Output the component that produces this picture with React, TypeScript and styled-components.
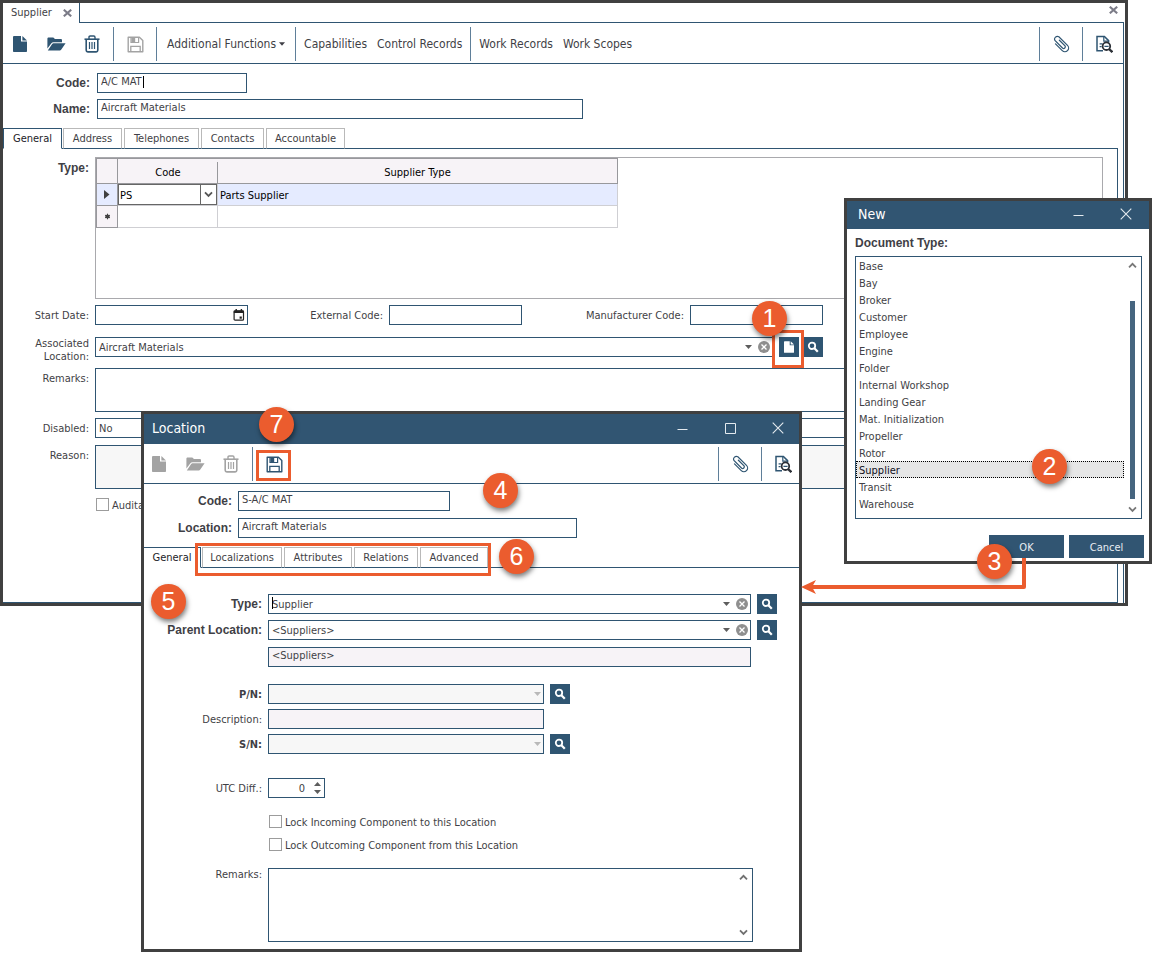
import React, { ReactNode, useId, useState } from 'react';
import styled, { createGlobalStyle, css } from 'styled-components';

const navy = '#2f5572';
const titleBlue = '#315572';
const frameGray = '#404040';
const orange = '#eb5c2e';
const text = '#3f3f46';
const uiFont = '"DejaVu Sans Condensed", "DejaVu Sans", sans-serif';
const labelFont = '"Liberation Sans", Arial, sans-serif';

const GlobalStyle = createGlobalStyle`
  *, *::before, *::after { box-sizing: border-box; }
  body { margin: 0; background: #fff; color: ${text}; font: 11px/16px ${uiFont}; }
  button, input, select, textarea { margin: 0; font: inherit; color: inherit; border-radius: 0; }
  button { padding: 0; border: 0; background: none; }
`;

/* ---------- desktop and windows ---------- */

const Desktop = styled.main`
  position: relative;
  min-width: 1152px;
  min-height: 953px;
`;

const WindowFrame = styled.section`
  position: absolute;
  background: #fff;
  border: 3px solid ${frameGray};
`;

const SupplierWindow = styled(WindowFrame)`
  top: 0;
  left: 0;
  right: 24px;
`;

const LocationWindow = styled(WindowFrame)`
  top: 411px;
  left: 141px;
  width: 661px;
`;

const NewWindow = styled(WindowFrame)`
  top: 198px;
  left: 844px;
  width: 308px;
`;

const TitleBar = styled.header<{ $tall?: boolean }>`
  display: flex;
  align-items: center;
  justify-content: space-between;
  height: ${(p) => (p.$tall ? 30 : 28)}px;
  padding: 0 ${(p) => (p.$tall ? 7 : 9)}px 2px ${(p) => (p.$tall ? 8 : 11)}px;
  background: ${titleBlue};
  color: #fff;
`;

const TitleText = styled.h2`
  margin: 0;
  font-size: 14px;
  line-height: 20px;
  font-weight: normal;
`;

const TitleButtons = styled.div`
  display: flex;
  gap: 20px;
`;

const TitleButton = styled.button`
  display: grid;
  place-items: center;
  width: 28px;
  height: 20px;
  color: #e4eaef;
`;

/* ---------- document tab strip ---------- */

const DocStrip = styled.div`
  display: flex;
  height: 20px;
  margin-right: 1px;
`;

const DocTab = styled.div`
  display: flex;
  align-items: center;
  justify-content: space-between;
  width: 77px;
  padding: 0 7px 1px 8px;
  border-right: 1px solid ${navy};
`;

const DocStripRest = styled.div`
  display: flex;
  flex: 1;
  align-items: flex-start;
  justify-content: flex-end;
  padding: 3px 6px 0 0;
  border-bottom: 1px solid ${navy};
`;

const SmallClose = styled.button`
  display: grid;
  place-items: center;
  width: 10px;
  height: 8px;
  color: #7c7c88;
`;

const DocBody = styled.div`
  min-height: 580px;
  margin-right: 1px;
  border-right: 1px solid ${navy};
`;

/* ---------- toolbar ---------- */

const Toolbar = styled.div<{ $dialog?: boolean }>`
  display: flex;
  justify-content: space-between;
  height: ${(p) => (p.$dialog ? 40 : 41)}px;
  padding: ${(p) => (p.$dialog ? '3px 2px 2px 1px' : '4px 5px 2px 3px')};
  border-bottom: 1px solid ${navy};
`;

const ToolSide = styled.div`
  display: flex;
`;

const ToolGroup = styled.div<{ $edge?: 'start' | 'end'; $last?: boolean }>`
  display: flex;
  align-items: center;
  gap: 8px;
  padding-left: ${(p) => (p.$edge === 'start' ? 0 : 7)}px;
  padding-right: ${(p) => (p.$last ? 0 : 7)}px;
  ${(p) =>
    p.$edge === 'end'
      ? css`border-left: 1px solid #5f7f99;`
      : !p.$last && css`border-right: 1px solid #5f7f99;`}
`;

const TextGroup = styled.div<{ $menu?: boolean; $last?: boolean }>`
  display: flex;
  align-items: center;
  gap: 10px;
  padding: 0 ${(p) => (p.$menu ? 10 : 8)}px;
  font-size: 12px;
  border-right: ${(p) => (p.$last ? '0' : '1px solid #5f7f99')};
`;

const IconButton = styled.button`
  display: grid;
  place-items: center;
  width: 28px;
  height: 28px;
  color: ${navy};
  &:disabled { color: #a3a3a3; }
`;

const TextButton = styled.button`
  display: flex;
  align-items: center;
  gap: 3px;
  white-space: nowrap;
`;

/* ---------- form parts ---------- */

const HeadForm = styled.div<{ $dialog?: boolean }>`
  display: grid;
  grid-template-columns: ${(p) => (p.$dialog ? 88 : 87)}px 1fr;
  column-gap: ${(p) => (p.$dialog ? 6 : 7)}px;
  row-gap: ${(p) => (p.$dialog ? 7 : 6)}px;
  padding: ${(p) => (p.$dialog ? 7 : 9)}px 0 9px;
`;

const Row = styled.div<{ $gap?: number; $labelWidth: number }>`
  display: grid;
  grid-template-columns: ${(p) => p.$labelWidth}px 1fr;
  column-gap: 6px;
  margin-top: ${(p) => p.$gap ?? 0}px;
`;

const Label = styled.label<{ $compact?: boolean }>`
  padding-top: ${(p) => (p.$compact ? 0 : 2)}px;
  text-align: right;
  line-height: ${(p) => (p.$compact ? 13 : 18)}px;
`;

const BoldLabel = styled.label`
  text-align: right;
  font: bold 12px/20px ${labelFont};
`;

const BoldCaption = styled.span`
  text-align: right;
  font: bold 12px/22px ${labelFont};
`;

const CodeLabel = styled(Label)`
  font-weight: bold;
`;

const Fields = styled.div`
  display: flex;
  gap: 6px;
  min-width: 0;
`;

const boxStyle = css`
  border: 1px solid ${navy};
  background: #fff;
  outline: none;
`;

const Input = styled.input<{ $w: number; $top?: boolean }>`
  ${boxStyle}
  display: block;
  width: ${(p) => p.$w}px;
  height: 20px;
  padding: 0 3px ${(p) => (p.$top ? 3 : 0)}px;
  &:read-only { background: #f7f3f7; }
`;

const InputWrap = styled.div`
  position: relative;
  width: fit-content;
`;

const Caret = styled.span<{ $x: number }>`
  position: absolute;
  top: 3px;
  left: ${(p) => p.$x}px;
  width: 1px;
  height: 12px;
  background: #000;
`;

const InlineLabel = styled(Label)<{ $w: number }>`
  width: ${(p) => p.$w}px;
  margin-left: -6px;
`;

const Area = styled.textarea<{ $h: number; $w?: number }>`
  ${boxStyle}
  display: block;
  width: ${(p) => (p.$w ? `${p.$w}px` : '100%')};
  height: ${(p) => p.$h}px;
  padding: 2px;
  resize: none;
  overflow: hidden;
  &:disabled { background: #f7f7f7; }
`;

const Select = styled.select`
  ${boxStyle}
  appearance: none;
  display: block;
  width: 100%;
  height: 20px;
  padding: 2px 3px 0;
  opacity: 1;
  &:disabled { background: #f7f7f7; }
`;

const ComboWrap = styled.div<{ $w?: number }>`
  position: relative;
  width: ${(p) => (p.$w ? `${p.$w}px` : '100%')};
`;

const ComboTools = styled.div`
  position: absolute;
  top: 0;
  right: 3px;
  display: flex;
  align-items: center;
  gap: 6px;
  height: 20px;
  color: #5d5d5d;
  pointer-events: none;
`;

const ClearButton = styled.button`
  display: grid;
  place-items: center;
  width: 12px;
  height: 12px;
  border-radius: 50%;
  background: #8f8f8f;
  color: #fff;
  pointer-events: auto;
`;

const SquareButton = styled.button`
  display: grid;
  place-items: center;
  width: 20px;
  height: 20px;
  background: ${navy};
  color: #fff;
`;

const ButtonPair = styled.div`
  display: flex;
  gap: 4px;
`;

const CheckLabel = styled.label`
  display: flex;
  align-items: flex-start;
  gap: 3px;
  height: 13px;
  padding-left: 1px;
  line-height: 15px;
  white-space: nowrap;
`;

const Check = styled.input`
  appearance: none;
  width: 13px;
  height: 13px;
  border: 1px solid #9c9c9c;
  background: #fff;
  &:checked { background: ${navy}; }
`;

const SpinWrap = styled.div`
  position: relative;
  width: 57px;
`;

const SpinInput = styled(Input)`
  appearance: textfield;
  padding-right: 19px;
  text-align: right;
  &::-webkit-inner-spin-button { appearance: none; }
`;

const SpinButtons = styled.div`
  position: absolute;
  top: 2px;
  right: 4px;
  display: flex;
  flex-direction: column;
  color: #5d5d5d;
`;

const SpinButton = styled.button`
  display: grid;
  place-items: center;
  width: 8px;
  height: 8px;
`;

const AreaWrap = styled.div`
  position: relative;
  width: fit-content;
`;

const AreaArrows = styled.div`
  position: absolute;
  top: 6px;
  bottom: 6px;
  right: 5px;
  display: flex;
  flex-direction: column;
  justify-content: space-between;
  color: #707070;
`;

/* ---------- tabs ---------- */

const Tabs = styled.div`
  display: flex;
  height: 21px;
`;

const Tab = styled.button<{ $w: number; $active?: boolean; $flush?: boolean }>`
  width: ${(p) => p.$w}px;
  padding-top: 1px;
  border: 1px solid #b9b9b9;
  border-bottom: 1px solid ${navy};
  ${(p) =>
    p.$active &&
    css`
      border-color: ${navy};
      border-bottom-color: transparent;
      color: #1c1c28;
    `}
  ${(p) => p.$flush && css`border-left: 0;`}
`;

const TabGap = styled.span<{ $narrow?: boolean }>`
  width: ${(p) => (p.$narrow ? 1 : 2)}px;
  border-bottom: 1px solid ${navy};
`;

const TabRest = styled.span<{ $inset?: boolean }>`
  flex: 1;
  margin-right: ${(p) => (p.$inset ? 5 : 0)}px;
  border-bottom: 1px solid ${navy};
`;

const SupplierPanel = styled.div`
  min-height: 454px;
  margin-right: 5px;
  padding: 8px 14px 8px 0;
  border: solid ${navy};
  border-width: 0 1px 1px 0;
`;

const LocationPanel = styled.div`
  padding: 26px 0 7px;
`;

/* ---------- type table ---------- */

const GridBox = styled.div`
  height: 142px;
  border: 1px solid #a9a9ad;
`;

const TypeTable = styled.table`
  width: 522px;
  table-layout: fixed;
  border-collapse: separate;
  border-spacing: 0;
  color: #000;

  th {
    height: 26px;
    padding: 3px 0 0;
    border: solid #98989c;
    border-width: 1px 0;
    background: #f7f3f7;
    font-weight: normal;
  }
  th:last-child { border-right-width: 1px; }
  th:nth-child(2) { background: linear-gradient(#98989c, #98989c) right bottom / 1px 21px no-repeat #f7f3f7; }
  td {
    height: 22px;
    padding: 0;
    border: solid #cfcfd3;
    border-width: 0 1px 1px 0;
  }
  td:last-child { padding: 2px 0 0 2px; }
  th:first-child, td:first-child {
    border-left: 1px solid #98989c;
    border-right: 1px solid #98989c;
  }
  td:first-child {
    background: #f7f3f7;
    border-bottom-color: #98989c;
    text-align: center;
    line-height: 0;
  }
`;

const ActiveRow = styled.tr`
  td, td:first-child { background: #e5ebff; }
`;

const CellSelectWrap = styled.div`
  position: relative;
  display: flex;
  align-items: center;
`;

const CellSelect = styled.select`
  appearance: none;
  display: block;
  width: 100%;
  height: 21px;
  padding: 2px 1px 0;
  border: 1px solid #666;
  background: #fff;
  color: #000;
  outline: none;
`;

const CellArrow = styled.span`
  position: absolute;
  top: 0;
  right: 0;
  display: grid;
  place-items: center;
  width: 17px;
  height: 21px;
  border: 1px solid #666;
  color: #555;
  pointer-events: none;
`;

/* ---------- document type list ---------- */

const DialogBody = styled.div`
  padding: 0 5px 3px 8px;
`;

const ListHeading = styled.h3`
  margin: 0;
  padding-top: 2px;
  font: bold 12px/25px ${labelFont};
`;

const ListFrame = styled.div`
  display: flex;
  height: 263px;
  margin-right: 2px;
  border: 1px solid ${navy};
`;

const List = styled.ul`
  flex: 1;
  margin: 0;
  padding: 0;
  list-style: none;
`;

const ListItem = styled.li<{ $selected: boolean }>`
  height: 17px;
  padding: 2px 3px 0;
  line-height: 16px;
  cursor: default;
  ${(p) =>
    p.$selected &&
    css`
      background: #e6e6e6;
      color: #10101c;
      outline: 1px dotted #000;
      outline-offset: -1px;
    `}
`;

const ScrollTrack = styled.div`
  display: flex;
  flex-direction: column;
  align-items: center;
  width: 17px;
  padding: 5px 0;
  color: #777;
`;

const ScrollThumb = styled.span`
  width: 5px;
  height: 200px;
  margin: 32px 0 7px;
  background: #46657f;
`;

const DialogActions = styled.div`
  display: flex;
  justify-content: flex-end;
  gap: 5px;
  margin-top: 16px;
`;

const ActionButton = styled.button`
  width: 75px;
  height: 23px;
  padding-top: 2px;
  background: ${titleBlue};
  color: #e8edf2;
`;

/* ---------- annotations over the windows ---------- */

const Highlight = styled.span<{ $x: number; $y: number; $w: number; $h: number }>`
  position: absolute;
  left: ${(p) => p.$x}px;
  top: ${(p) => p.$y}px;
  width: ${(p) => p.$w}px;
  height: ${(p) => p.$h}px;
  border: 3px solid ${orange};
  pointer-events: none;
`;

const Callout = styled.span<{ $x: number; $y: number }>`
  position: absolute;
  left: ${(p) => p.$x}px;
  top: ${(p) => p.$y}px;
  width: 35px;
  height: 35px;
  border-radius: 50%;
  background: ${orange};
  box-shadow: 1px 3px 5px rgba(0, 0, 0, 0.5);
  color: #fff;
  font: 25px/35px ${labelFont};
  text-align: center;
  pointer-events: none;
`;

const ArrowLayer = styled.svg`
  position: absolute;
  left: 800px;
  top: 556px;
  pointer-events: none;
`;

/* ---------- icons ---------- */

const FileIcon = ({ small }: { small?: boolean }) => (
  <svg width={small ? 10 : 14} height={small ? 12 : 16} viewBox="0 0 14 16" fill="currentColor" aria-hidden>
    <path d="M1 0h7v5.5h6V15.2a.8.8 0 0 1-.8.8H.8a.8.8 0 0 1-.8-.8V1a1 1 0 0 1 1-1z" />
    <path d="M9.4 0 14 4.4H9.4z" />
  </svg>
);

const FolderIcon = () => (
  <svg width="19" height="14" viewBox="0 0 19 14" fill="currentColor" aria-hidden>
    <path d="M.4 11.5V1.6C.4.8 1 .4 1.7.4h4.2c.7 0 1.1.3 1.4.9l.4.8h6c.8 0 1.3.5 1.3 1.2v1.9H6.6c-1 0-1.8.4-2.4 1.2z" />
    <path d="M.8 13.6 5 7.3c.5-.8 1.1-1.1 2-1.1h11.6l-4.3 6.3c-.5.8-1.1 1.1-2 1.1z" />
  </svg>
);

const TrashIcon = () => (
  <svg width="16" height="18" viewBox="0 0 16 18" fill="none" stroke="currentColor" aria-hidden>
    <path d="M.5 4.2h15" strokeWidth="1.6" />
    <path d="M5 4V2.2c0-.8.4-1.2 1.2-1.2h3.6c.8 0 1.2.4 1.2 1.2V4" strokeWidth="1.4" />
    <path d="M2.2 4.5v10.8c0 1 .6 1.6 1.6 1.6h8.4c1 0 1.6-.6 1.6-1.6V4.5" strokeWidth="1.6" />
    <path d="M5.5 7v7M8 7v7M10.5 7v7" strokeWidth="1.2" />
  </svg>
);

const SaveIcon = () => (
  <svg width="17" height="17" viewBox="0 0 17 17" fill="none" stroke="currentColor" aria-hidden>
    <path d="M1.2 1.2h11.2l3.4 3.4v11.2H1.2z" strokeWidth="1.4" strokeLinejoin="round" />
    <path d="M4 1.5v5h7.6v-5" strokeWidth="1.2" />
    <path d="M4.4 1.5h3.8v4.8H4.4z" fill="currentColor" stroke="none" />
    <path d="M3.8 15.6v-5.2h9.4v5.2" strokeWidth="1.3" />
  </svg>
);

const ClipIcon = () => (
  <svg width="18" height="18" viewBox="0 0 18 18" fill="none" stroke="currentColor" strokeWidth="1.2" strokeLinecap="round" aria-hidden>
    <path
      transform="rotate(-45 9 9)"
      d="M5.2 5V14.6a3.7 3.7 0 0 0 7.4 0V2.4a2.8 2.8 0 0 0-5.4-.2v11a1.7 1.7 0 0 0 3.3 0V5.2"
    />
  </svg>
);

const PreviewIcon = () => (
  <svg width="18" height="18" viewBox="0 0 18 18" fill="none" stroke="currentColor" aria-hidden>
    <path d="M8 15.8H2V1.4h7.4l4.2 4.2v1.8" strokeWidth="1.5" />
    <path d="M8.8 1.4v4.8h4.8" strokeWidth="1.2" />
    <path d="M4.6 8.8h3M4.6 11.6h2M9.4 11.4h4.2" strokeWidth="1.3" />
    <circle cx="11.4" cy="11.2" r="3.8" stroke="#2b2f36" strokeWidth="1.8" />
    <path d="m14 14 3.4 3.2" stroke="#2b2f36" strokeWidth="2.4" />
  </svg>
);

const SearchIcon = () => (
  <svg width="12" height="12" viewBox="0 0 12 12" fill="none" stroke="currentColor" aria-hidden>
    <circle cx="5" cy="4.8" r="3.2" strokeWidth="1.8" />
    <path d="m7.4 7.2 3.4 3.6" strokeWidth="2.2" />
  </svg>
);

const CalendarIcon = () => (
  <svg width="12" height="12" viewBox="0 0 12 12" fill="none" stroke="#222" aria-hidden>
    <rect x="1.1" y="1.8" width="9.4" height="9.4" rx="1" strokeWidth="1.2" />
    <path d="M.8 2.8h10" strokeWidth="2.4" />
    <path d="M3.2 0v2M8.4 0v2" strokeWidth="1.4" />
    <path d="M6.6 8.6h2.2" strokeWidth="2.2" />
  </svg>
);

const Triangle = ({ up, dim, w = 7 }: { up?: boolean; dim?: boolean; w?: number }) => (
  <svg width={w} height="4" viewBox="0 0 7 4" fill={dim ? '#b9b9b9' : 'currentColor'} aria-hidden>
    <path d={up ? 'M0 4h7L3.5 0z' : 'M0 0h7L3.5 4z'} />
  </svg>
);

const Chevron = ({ up }: { up?: boolean }) => (
  <svg width="9" height="7" viewBox="0 0 9 7" fill="none" stroke="currentColor" strokeWidth="1.8" aria-hidden>
    <path d={up ? 'M1 5.4 4.5 1.8 8 5.4' : 'M1 1.4 4.5 5 8 1.4'} />
  </svg>
);

const BoldCross = () => (
  <svg width="9" height="8" viewBox="0 0 9 8" stroke="currentColor" strokeWidth="2.1" aria-hidden>
    <path d="m.8.7 7.4 6.6M8.2.7.8 7.3" />
  </svg>
);

const TinyCross = () => (
  <svg width="6" height="6" viewBox="0 0 6 6" stroke="currentColor" strokeWidth="1.3" aria-hidden>
    <path d="m.5.5 5 5m0-5-5 5" />
  </svg>
);

const MinimizeIcon = () => (
  <svg width="11" height="11" viewBox="0 0 11 11" stroke="currentColor" aria-hidden>
    <path d="M.5 6.5h10" />
  </svg>
);

const MaximizeIcon = () => (
  <svg width="11" height="11" viewBox="0 0 11 11" fill="none" stroke="currentColor" aria-hidden>
    <path d="M.5.5h10v10H.5z" />
  </svg>
);

const CloseIcon = () => (
  <svg width="12" height="12" viewBox="0 0 12 12" stroke="currentColor" strokeWidth="1.1" aria-hidden>
    <path d="m.7.7 10.6 10.6M11.3.7.7 11.3" />
  </svg>
);

const RowMarker = () => (
  <svg width="6" height="9" viewBox="0 0 6 9" fill="#404040" aria-hidden>
    <path d="M0 0v9l5.5-4.5z" />
  </svg>
);

const NewRowMarker = () => (
  <svg width="7" height="7" viewBox="0 0 7 7" stroke="#404040" fill="#404040" aria-hidden>
    <circle cx="3.5" cy="3.5" r="2.1" stroke="none" />
    <path d="M3.5.7v5.6M1 2.1l5 2.8M6 2.1 1 4.9" strokeWidth="1" />
  </svg>
);

/* ---------- composed controls ---------- */

type ComboProps = { id: string; w?: number; value?: string; clearable?: boolean; disabled?: boolean; children?: ReactNode };

function Combo({ id, w, value = '', clearable, disabled, children }: ComboProps) {
  const [current, setCurrent] = useState(value);
  return (
    <ComboWrap $w={w}>
      <Select id={id} value={current} disabled={disabled} onChange={(e) => setCurrent(e.target.value)}>
        <option value={value}>{value}</option>
        {value !== '' && <option value="" />}
      </Select>
      <ComboTools>
        <Triangle dim={disabled} />
        {clearable && (
          <ClearButton type="button" aria-label="Clear" onClick={() => setCurrent('')}>
            <TinyCross />
          </ClearButton>
        )}
      </ComboTools>
      {children}
    </ComboWrap>
  );
}

const SearchButton = () => (
  <SquareButton type="button" aria-label="Search">
    <SearchIcon />
  </SquareButton>
);

function TabBar({ items, inset, flush }: { items: [string, number][]; inset?: boolean; flush?: boolean }) {
  const [active, setActive] = useState(items[0][0]);
  return (
    <Tabs role="tablist">
      {items.map(([name, width], i) => (
        <React.Fragment key={name}>
          {i > 0 && <TabGap $narrow={i === 1} />}
          <Tab
            type="button"
            role="tab"
            aria-selected={active === name}
            $w={width}
            $active={active === name}
            $flush={flush && i === 0}
            onClick={() => setActive(name)}
          >
            {name}
          </Tab>
        </React.Fragment>
      ))}
      <TabRest $inset={inset} />
    </Tabs>
  );
}

function FileTools({ disabled }: { disabled?: boolean }) {
  return (
    <ToolGroup $edge="start">
      <IconButton type="button" aria-label="New" disabled={disabled}><FileIcon /></IconButton>
      <IconButton type="button" aria-label="Open" disabled={disabled}><FolderIcon /></IconButton>
      <IconButton type="button" aria-label="Delete" disabled={disabled}><TrashIcon /></IconButton>
    </ToolGroup>
  );
}

function DocumentTools() {
  return (
    <ToolSide>
      <ToolGroup $edge="end">
        <IconButton type="button" aria-label="Attachments"><ClipIcon /></IconButton>
      </ToolGroup>
      <ToolGroup $edge="end" $last>
        <IconButton type="button" aria-label="Preview"><PreviewIcon /></IconButton>
      </ToolGroup>
    </ToolSide>
  );
}

/* ---------- windows ---------- */

const SIDE = 86;

function SupplierForm() {
  const id = useId();
  return (
    <SupplierPanel>
      <Row $labelWidth={SIDE}>
        <BoldCaption>Type:</BoldCaption>
        <GridBox>
          <TypeTable>
            <colgroup>
              <col width={22} />
              <col width={100} />
              <col width={400} />
            </colgroup>
            <thead>
              <tr><th /><th>Code</th><th>Supplier Type</th></tr>
            </thead>
            <tbody>
              <ActiveRow>
                <td><RowMarker /></td>
                <td>
                  <CellSelectWrap>
                    <CellSelect aria-label="Code" defaultValue="PS"><option>PS</option></CellSelect>
                    <CellArrow><Chevron /></CellArrow>
                  </CellSelectWrap>
                </td>
                <td>Parts Supplier</td>
              </ActiveRow>
              <tr><td><NewRowMarker /></td><td /><td /></tr>
            </tbody>
          </TypeTable>
        </GridBox>
      </Row>
      <Row $labelWidth={SIDE} $gap={6}>
        <Label htmlFor={`${id}start`}>Start Date:</Label>
        <Fields>
          <ComboWrap $w={153}>
            <Input id={`${id}start`} $w={153} />
            <ComboTools><CalendarIcon /></ComboTools>
          </ComboWrap>
          <InlineLabel $w={135} htmlFor={`${id}ext`}>External Code:</InlineLabel>
          <Input id={`${id}ext`} $w={133} />
          <InlineLabel $w={162} htmlFor={`${id}man`}>Manufacturer Code:</InlineLabel>
          <Input id={`${id}man`} $w={133} />
        </Fields>
      </Row>
      <Row $labelWidth={SIDE} $gap={12}>
        <Label $compact htmlFor={`${id}loc`}>Associated Location:</Label>
        <Fields>
          <Combo id={`${id}loc`} w={678} value="Aircraft Materials" clearable />
          <ButtonPair>
            <SquareButton type="button" aria-label="New location"><FileIcon small /></SquareButton>
            <SearchButton />
          </ButtonPair>
        </Fields>
      </Row>
      <Row $labelWidth={SIDE} $gap={5}>
        <Label htmlFor={`${id}rem`}>Remarks:</Label>
        <Area id={`${id}rem`} $h={44} />
      </Row>
      <Row $labelWidth={SIDE} $gap={6}>
        <Label htmlFor={`${id}dis`}>Disabled:</Label>
        <Combo id={`${id}dis`} value="No" />
      </Row>
      <Row $labelWidth={SIDE} $gap={7}>
        <Label htmlFor={`${id}rea`}>Reason:</Label>
        <Area id={`${id}rea`} $h={44} disabled />
      </Row>
      <Row $labelWidth={SIDE} $gap={9}>
        <span />
        <CheckLabel><Check type="checkbox" />Auditable</CheckLabel>
      </Row>
    </SupplierPanel>
  );
}

function Supplier() {
  const id = useId();
  return (
    <SupplierWindow aria-label="Supplier">
      <DocStrip>
        <DocTab>
          Supplier
          <SmallClose type="button" aria-label="Close tab"><BoldCross /></SmallClose>
        </DocTab>
        <DocStripRest>
          <SmallClose type="button" aria-label="Close window"><BoldCross /></SmallClose>
        </DocStripRest>
      </DocStrip>
      <DocBody>
        <Toolbar>
          <ToolSide>
            <FileTools />
            <ToolGroup>
              <IconButton type="button" aria-label="Save" disabled><SaveIcon /></IconButton>
            </ToolGroup>
            <TextGroup $menu>
              <TextButton type="button">Additional Functions<Triangle w={6} /></TextButton>
            </TextGroup>
            <TextGroup>
              <TextButton type="button">Capabilities</TextButton>
              <TextButton type="button">Control Records</TextButton>
            </TextGroup>
            <TextGroup $last>
              <TextButton type="button">Work Records</TextButton>
              <TextButton type="button">Work Scopes</TextButton>
            </TextGroup>
          </ToolSide>
          <DocumentTools />
        </Toolbar>
        <HeadForm>
          <BoldLabel htmlFor={`${id}code`}>Code:</BoldLabel>
          <InputWrap>
            <Input id={`${id}code`} $w={150} $top defaultValue="A/C MAT" />
            <Caret $x={46} />
          </InputWrap>
          <BoldLabel htmlFor={`${id}name`}>Name:</BoldLabel>
          <Input id={`${id}name`} $w={486} $top defaultValue="Aircraft Materials" />
        </HeadForm>
        <TabBar
          inset
          items={[['General', 59], ['Address', 59], ['Telephones', 75], ['Contacts', 63], ['Accountable', 79]]}
        />
        <SupplierForm />
      </DocBody>
    </SupplierWindow>
  );
}

const WIDE = 118;

function Location() {
  const id = useId();
  return (
    <LocationWindow aria-label="Location">
      <TitleBar $tall>
        <TitleText>Location</TitleText>
        <TitleButtons>
          <TitleButton type="button" aria-label="Minimize"><MinimizeIcon /></TitleButton>
          <TitleButton type="button" aria-label="Maximize"><MaximizeIcon /></TitleButton>
          <TitleButton type="button" aria-label="Close"><CloseIcon /></TitleButton>
        </TitleButtons>
      </TitleBar>
      <Toolbar $dialog>
        <ToolSide>
          <FileTools disabled />
          <ToolGroup $last>
            <IconButton type="button" aria-label="Save"><SaveIcon /></IconButton>
          </ToolGroup>
        </ToolSide>
        <DocumentTools />
      </Toolbar>
      <HeadForm $dialog>
        <BoldLabel htmlFor={`${id}code`}>Code:</BoldLabel>
        <Input id={`${id}code`} $w={212} $top defaultValue="S-A/C MAT" />
        <BoldLabel htmlFor={`${id}loc`}>Location:</BoldLabel>
        <Input id={`${id}loc`} $w={339} $top defaultValue="Aircraft Materials" />
      </HeadForm>
      <TabBar
        flush
        items={[['General', 57], ['Localizations', 80], ['Attributes', 68], ['Relations', 64], ['Advanced', 68]]}
      />
      <LocationPanel>
        <Row $labelWidth={WIDE}>
          <BoldLabel htmlFor={`${id}type`}>Type:</BoldLabel>
          <Fields>
            <Combo id={`${id}type`} w={483} value="Supplier" clearable>
              <Caret $x={4} />
            </Combo>
            <SearchButton />
          </Fields>
        </Row>
        <Row $labelWidth={WIDE} $gap={6}>
          <BoldLabel htmlFor={`${id}parent`}>Parent Location:</BoldLabel>
          <Fields>
            <Combo id={`${id}parent`} w={483} value="<Suppliers>" clearable />
            <SearchButton />
          </Fields>
        </Row>
        <Row $labelWidth={WIDE} $gap={7}>
          <span />
          <Input $w={483} $top readOnly aria-label="Parent location name" value="<Suppliers>" />
        </Row>
        <Row $labelWidth={WIDE} $gap={17}>
          <CodeLabel htmlFor={`${id}pn`}>P/N:</CodeLabel>
          <Fields>
            <Combo id={`${id}pn`} w={276} disabled />
            <SearchButton />
          </Fields>
        </Row>
        <Row $labelWidth={WIDE} $gap={5}>
          <Label htmlFor={`${id}desc`}>Description:</Label>
          <Input id={`${id}desc`} $w={276} readOnly />
        </Row>
        <Row $labelWidth={WIDE} $gap={5}>
          <CodeLabel htmlFor={`${id}sn`}>S/N:</CodeLabel>
          <Fields>
            <Combo id={`${id}sn`} w={276} disabled />
            <SearchButton />
          </Fields>
        </Row>
        <Row $labelWidth={WIDE} $gap={24}>
          <Label htmlFor={`${id}utc`}>UTC Diff.:</Label>
          <SpinWrap>
            <SpinInput id={`${id}utc`} type="number" $w={57} defaultValue={0} />
            <SpinButtons>
              <SpinButton type="button" aria-label="Increase"><Triangle up /></SpinButton>
              <SpinButton type="button" aria-label="Decrease"><Triangle /></SpinButton>
            </SpinButtons>
          </SpinWrap>
        </Row>
        <Row $labelWidth={WIDE} $gap={17}>
          <span />
          <CheckLabel><Check type="checkbox" />Lock Incoming Component to this Location</CheckLabel>
        </Row>
        <Row $labelWidth={WIDE} $gap={10}>
          <span />
          <CheckLabel><Check type="checkbox" />Lock Outcoming Component from this Location</CheckLabel>
        </Row>
        <Row $labelWidth={WIDE} $gap={17}>
          <Label $compact htmlFor={`${id}rem`}>Remarks:</Label>
          <AreaWrap>
            <Area id={`${id}rem`} $w={485} $h={74} />
            <AreaArrows><Chevron up /><Chevron /></AreaArrows>
          </AreaWrap>
        </Row>
      </LocationPanel>
    </LocationWindow>
  );
}

const DOCUMENT_TYPES = [
  'Base', 'Bay', 'Broker', 'Customer', 'Employee', 'Engine', 'Folder', 'Internal Workshop',
  'Landing Gear', 'Mat. Initialization', 'Propeller', 'Rotor', 'Supplier', 'Transit', 'Warehouse',
];

function NewDocument() {
  const [selected, setSelected] = useState('Supplier');
  const headingId = useId();
  return (
    <NewWindow role="dialog" aria-label="New">
      <TitleBar>
        <TitleText>New</TitleText>
        <TitleButtons>
          <TitleButton type="button" aria-label="Minimize"><MinimizeIcon /></TitleButton>
          <TitleButton type="button" aria-label="Close"><CloseIcon /></TitleButton>
        </TitleButtons>
      </TitleBar>
      <DialogBody>
        <ListHeading id={headingId}>Document Type:</ListHeading>
        <ListFrame>
          <List role="listbox" aria-labelledby={headingId}>
            {DOCUMENT_TYPES.map((name) => (
              <ListItem
                key={name}
                role="option"
                aria-selected={name === selected}
                $selected={name === selected}
                onClick={() => setSelected(name)}
              >
                {name}
              </ListItem>
            ))}
          </List>
          <ScrollTrack>
            <Chevron up />
            <ScrollThumb />
            <Chevron />
          </ScrollTrack>
        </ListFrame>
        <DialogActions>
          <ActionButton type="button">OK</ActionButton>
          <ActionButton type="button">Cancel</ActionButton>
        </DialogActions>
      </DialogBody>
    </NewWindow>
  );
}

const CALLOUTS: [number, number][] = [
  [752, 301], [1032, 449], [977, 544], [483, 473], [151, 584], [499, 539], [259, 407],
];

export default function App() {
  return (
    <>
      <GlobalStyle />
      <Desktop>
        <Supplier />
        <Location />
        <NewDocument />
        <ArrowLayer width="230" height="44" viewBox="0 0 230 44" fill="none" aria-hidden>
          <path d="M224 2v29H12" stroke={orange} strokeWidth="4" strokeLinejoin="round" />
          <path d="m1 31 15-7-4 7 4 7z" fill={orange} />
        </ArrowLayer>
        <Highlight $x={772} $y={330} $w={32} $h={38} />
        <Highlight $x={195} $y={543} $w={296} $h={33} />
        <Highlight $x={256} $y={450} $w={35} $h={31} />
        {CALLOUTS.map(([x, y], i) => (
          <Callout key={i} $x={x} $y={y}>{i + 1}</Callout>
        ))}
      </Desktop>
    </>
  );
}
